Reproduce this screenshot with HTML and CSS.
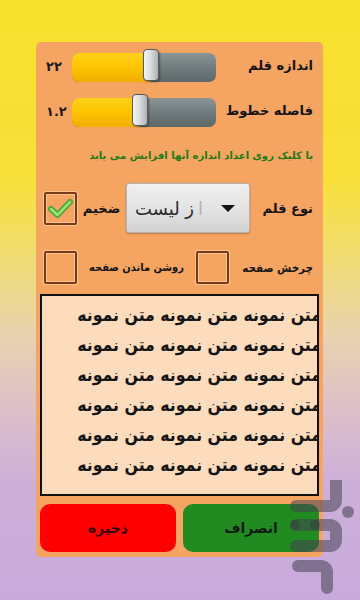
FILE: index.html
```html
<!DOCTYPE html>
<html lang="fa">
<head>
<meta charset="utf-8">
<link rel="stylesheet" href="styles.css">
</head>
<body>
<div class="panel">
  <div class="srow srow-first">
    <span class="val">۲۲</span>
    <div class="slider">
      <div class="track"><div class="fill" style="width:78px"></div></div>
      <div class="thumb" style="left:71px"></div>
    </div>
    <span class="lbl">اندازه قلم</span>
  </div>
  <div class="srow srow-second">
    <span class="val">۱.۲</span>
    <div class="slider">
      <div class="track"><div class="fill" style="width:67px"></div></div>
      <div class="thumb" style="left:60px"></div>
    </div>
    <span class="lbl">فاصله خطوط</span>
  </div>
  <div class="hint">با کلیک روی اعداد اندازه آنها افزایش می یابد</div>
  <div class="fontrow">
    <div class="check">
      <svg class="tick" viewBox="0 0 33 33" width="33" height="33">
        <path d="M7 17 L13.5 23 L26 10" fill="none" stroke="#4fa83a" stroke-width="6" stroke-linecap="round" stroke-linejoin="round"/>
        <path d="M7 17 L13.5 23 L26 10" fill="none" stroke="#9ee27a" stroke-width="2.5" stroke-linecap="round" stroke-linejoin="round"/>
      </svg>
    </div>
    <span class="bold-lbl">ضخیم</span>
    <div class="spinner">
      <span class="spin-text"><span class="fade">ا</span>ز لیست</span>
      <span class="arrow"></span>
    </div>
    <span class="lbl">نوع قلم</span>
  </div>
  <div class="checkrow">
    <div class="check"></div>
    <span class="mid-lbl">روشن ماندن صفحه</span>
    <div class="check"></div>
    <span class="lbl small">چرخش صفحه</span>
  </div>
  <div class="sample">
    <div class="sample-inner">
      <div class="line">متن نمونه متن نمونه متن نمونه</div>
      <div class="line">متن نمونه متن نمونه متن نمونه</div>
      <div class="line">متن نمونه متن نمونه متن نمونه</div>
      <div class="line">متن نمونه متن نمونه متن نمونه</div>
      <div class="line">متن نمونه متن نمونه متن نمونه</div>
      <div class="line">متن نمونه متن نمونه متن نمونه</div>
    </div>
  </div>
  <div class="buttons">
    <div class="btn btn-save">ذخیره</div>
    <div class="btn btn-cancel">انصراف</div>
  </div>
</div>
<svg class="logo" viewBox="0 0 80 120" width="80" height="120">
  <g fill="none" stroke="rgba(70,66,84,0.55)" stroke-width="12" stroke-linecap="round" stroke-linejoin="round">
    <path d="M56 -8 V20 a6 6 0 0 1 -6 6 H16"/>
    <path d="M16 45 H50 a6 6 0 0 1 6 6 V60 a6 6 0 0 1 -6 6 H16"/>
    <path d="M18 86 H41 a6 6 0 0 1 6 6 V108"/>
  </g>
  <circle cx="68" cy="32" r="6" fill="rgba(70,66,84,0.55)"/>
  <circle cx="15" cy="45" r="5" fill="rgba(50,50,60,0.35)"/>
  <circle cx="35" cy="45" r="5" fill="rgba(50,50,60,0.35)"/>
</svg>
</body>
</html>
```

FILE: styles.css
```css
html, body {
  margin: 0;
  padding: 0;
}
body {
  width: 360px;
  height: 600px;
  overflow: hidden;
  position: relative;
  font-family: "DejaVu Sans", sans-serif;
  background: linear-gradient(to bottom, #f8e12c 0%, #f7e03a 30%, #f0dc78 44%, #e8d2b0 56%, #dcc0c8 68%, #cdb0d8 80%, #c8aadc 100%);
}
.panel {
  width: 287px;
  height: 515px;
  margin: 42px 0 0 36px;
  background: #f5a462;
  border-radius: 5px;
  padding: 0 4px 5px;
  box-sizing: border-box;
  display: flex;
  flex-direction: column;
}
.srow {
  display: flex;
  align-items: center;
  height: 33px;
  padding: 0 6px 0 6px;
}
.srow-first { margin-top: 7px; }
.srow-second { margin-top: 12px; }
.val {
  width: 26px;
  font-weight: bold;
  font-size: 13px;
  color: #1a1a1a;
  padding-top: 2px;
}
.slider {
  position: relative;
  width: 144px;
  height: 33px;
}
.track {
  position: absolute;
  left: 0;
  top: 4px;
  width: 144px;
  height: 29px;
  border-radius: 7px;
  overflow: hidden;
  background: linear-gradient(to bottom, #8a9596 0%, #6f7b7d 50%, #5d686a 100%);
}
.fill {
  height: 100%;
  background: linear-gradient(to bottom, #ffd21a 0%, #fdc400 50%, #f2ae00 100%);
}
.thumb {
  position: absolute;
  top: 0;
  width: 14px;
  height: 30px;
  border: 1px solid #5a5a5a;
  border-radius: 4px;
  background: linear-gradient(to right, #f4f4f4 0%, #dcdee0 45%, #aeb2b5 100%);
  box-shadow: 1px 1px 2px rgba(0,0,0,0.35);
}
.lbl {
  flex: 1;
  text-align: right;
  direction: rtl;
  font-weight: bold;
  font-size: 13px;
  color: #141414;
  white-space: nowrap;
}
.lbl.small {
  font-size: 11.5px;
  font-family: "DejaVu Sans Condensed", "DejaVu Sans", sans-serif;
}
.hint {
  margin-top: 21px;
  height: 16px;
  line-height: 16px;
  direction: rtl;
  text-align: right;
  padding-right: 6px;
  font-weight: bold;
  font-size: 10.1px;
  color: #1d7a16;
  white-space: nowrap;
}
.fontrow {
  margin-top: 19px;
  height: 50px;
  display: flex;
  align-items: center;
  padding: 0 6px 0 4px;
}
.check {
  width: 33px;
  height: 33px;
  box-sizing: border-box;
  border: 2px solid #7a3c16;
  border-radius: 2px;
  box-shadow: 0 0 0 1px #fcc494, inset 0 0 0 1px #fcc494;
  background: #f5a462;
  flex: none;
}
.tick {
  display: block;
  margin: -2px;
}
.bold-lbl {
  width: 49px;
  text-align: center;
  direction: rtl;
  font-weight: bold;
  font-size: 13px;
  color: #141414;
}
.spinner {
  width: 124px;
  height: 50px;
  box-sizing: border-box;
  border: 1px solid #b7b2ad;
  border-radius: 3px;
  background: linear-gradient(to bottom, #f0f0f0 0%, #e4e4e4 50%, #d2d2d2 100%);
  box-shadow: 0 1px 2px rgba(0,0,0,0.25);
  display: flex;
  align-items: center;
  padding: 0 14px 0 8px;
}
.spin-text {
  flex: 1;
  direction: rtl;
  text-align: left;
  font-size: 18px;
  color: #2a2a2a;
  white-space: nowrap;
}
.fade {
  color: #b4b4b4;
  margin-left: 4px;
}
.arrow {
  width: 0;
  height: 0;
  border-left: 7px solid transparent;
  border-right: 7px solid transparent;
  border-top: 7px solid #111;
  margin-left: 10px;
}
.checkrow {
  margin-top: 18px;
  height: 33px;
  display: flex;
  align-items: center;
  padding: 0 6px 0 4px;
}
.mid-lbl {
  width: 119px;
  text-align: center;
  direction: rtl;
  font-weight: bold;
  font-size: 11px;
  font-family: "DejaVu Sans Condensed", "DejaVu Sans", sans-serif;
  color: #141414;
  white-space: nowrap;
}
.sample {
  margin-top: 10px;
  height: 202px;
  box-sizing: border-box;
  border: 2px solid #111;
  background: #fddbbd;
  overflow: hidden;
}
.sample-inner {
  margin-right: -4px;
  padding-top: 4px;
  direction: rtl;
  text-align: right;
}
.line {
  height: 30px;
  line-height: 30px;
  font-size: 17.5px;
  font-weight: bold;
  font-family: "DejaVu Sans Condensed", "DejaVu Sans", sans-serif;
  color: #141414;
  white-space: nowrap;
}
.buttons {
  margin-top: 8px;
  height: 48px;
  display: flex;
  gap: 7px;
}
.btn {
  flex: 1;
  border-radius: 10px;
  display: flex;
  align-items: center;
  justify-content: center;
  font-weight: bold;
  font-size: 14px;
  direction: rtl;
}
.btn-save {
  background: #fe0000;
  color: #3a0000;
}
.btn-cancel {
  background: #218a21;
  color: #0e1a0e;
}
.logo {
  position: absolute;
  left: 280px;
  top: 480px;
}
```
